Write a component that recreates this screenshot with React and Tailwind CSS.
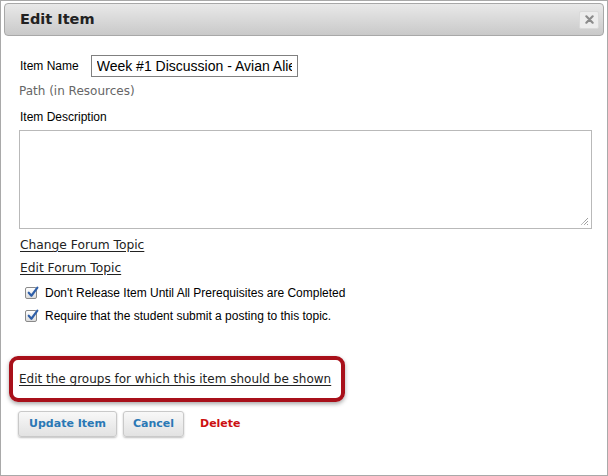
import React from 'react';

const Check = () => (
  <span className="relative inline-block w-[12px] h-[12px] rounded-[2px] border border-[#8a8a8a] bg-gradient-to-b from-white to-[#dcdcdc] shrink-0">
    <svg viewBox="0 0 12 12" className="absolute -top-[2px] left-[0px] w-[13px] h-[13px]">
      <path d="M2.5 6.2 L5 9 L10.5 1.5" fill="none" stroke="#2f5fa8" strokeWidth="2" strokeLinecap="round" strokeLinejoin="round" />
    </svg>
  </span>
);

const Btn = ({ children, w }) => (
  <button className={`${w} h-[26px] rounded-[3px] border border-[#c9c9c9] bg-gradient-to-b from-[#f8f8f8] to-[#e2e2e2] shadow-[0_1px_2px_rgba(0,0,0,0.25)] text-[11px] font-bold text-[#2a78b5] font-['DejaVu_Sans',sans-serif]`}>
    {children}
  </button>
);

export default function App() {
  const sans = "font-['Liberation_Sans',Arial,sans-serif]";
  const verd = "font-['DejaVu_Sans',Verdana,sans-serif]";
  return (
    <div className="w-[608px] h-[476px] bg-white border border-[#a9a9a9] overflow-hidden">
      {/* title bar */}
      <div className="mx-[3px] mt-[2px] h-[33px] flex items-center justify-between pl-[15px] pr-[4px] rounded-[4px] border border-[#a8a8a8] bg-gradient-to-b from-[#e9e9e9] to-[#c9c9c9]">
        <span className={`${verd} text-[14.5px] font-bold text-[#222]`}>Edit Item</span>
        <span className="w-[20px] h-[18px] rounded-[2px] bg-[#ededed] border border-[#dadada] flex items-center justify-center">
          <svg viewBox="0 0 10 10" className="w-[9px] h-[9px]">
            <path d="M1.5 1.5 L8.5 8.5 M8.5 1.5 L1.5 8.5" stroke="#8c8c8c" strokeWidth="2.4" strokeLinecap="round" />
          </svg>
        </span>
      </div>

      <div className="pl-[18px]">
        <div className="mt-[19px] flex items-center">
          <span className={`${sans} text-[12px] leading-[16px] text-black pl-[1px]`}>Item Name</span>
          <input
            readOnly
            value="Week #1 Discussion - Avian Aliens"
            className={`${sans} ml-[12px] w-[207px] h-[22px] border border-[#808080] px-[5px] text-[14px] text-black outline-none`}
          />
        </div>
        <div className={`${verd} mt-[6px] text-[12px] leading-[16px] text-[#666]`}>Path (in Resources)</div>
        <div className={`${sans} mt-[10px] text-[12px] leading-[16px] text-black pl-[1px]`}>Item Description</div>
        <div className="relative mt-[5px] w-[573px] h-[99px]">
          <textarea className="w-full h-full border border-[#b9b9b9] resize-none outline-none block" />
          <svg viewBox="0 0 10 10" className="absolute right-[3px] bottom-[3px] w-[10px] h-[10px]">
            <path d="M9 2 L2 9 M9 5 L5 9 M9 8 L8 9" stroke="#777" strokeWidth="1" strokeDasharray="1 0.6" />
          </svg>
        </div>
        <div className={`${verd} mt-[8px] text-[12.25px] leading-[16px] text-[#222] underline underline-offset-2 pl-[1px]`}>Change Forum Topic</div>
        <div className={`${verd} mt-[7px] text-[12.25px] leading-[16px] text-[#222] underline underline-offset-2 pl-[1px]`}>Edit Forum Topic</div>
        <div className={`${sans} mt-[9px] flex items-center gap-[8px] pl-[6px] text-[12px] leading-[16px] text-black`}>
          <Check />
          <span>Don't Release Item Until All Prerequisites are Completed</span>
        </div>
        <div className={`${sans} mt-[7px] flex items-center gap-[8px] pl-[6px] text-[12px] leading-[16px] text-black`}>
          <Check />
          <span>Require that the student submit a posting to this topic.</span>
        </div>
      </div>

      <div className="ml-[8px] mt-[32px] w-[336px] h-[46px] rounded-[9px] border-4 border-[#a8101a] shadow-[0_2px_4px_rgba(0,0,0,0.35)] flex items-center pl-[6px]">
        <span className={`${verd} text-[12px] leading-[16px] text-[#222] underline underline-offset-2`}>Edit the groups for which this item should be shown</span>
      </div>

      <div className="pl-[17px] mt-[9px] flex items-center gap-[6px]">
        <Btn w="w-[99px]">Update Item</Btn>
        <Btn w="w-[61px]">Cancel</Btn>
        <span className="ml-[10px] text-[11px] font-bold text-[#cc1111] font-['DejaVu_Sans',sans-serif]">Delete</span>
      </div>
    </div>
  );
}
